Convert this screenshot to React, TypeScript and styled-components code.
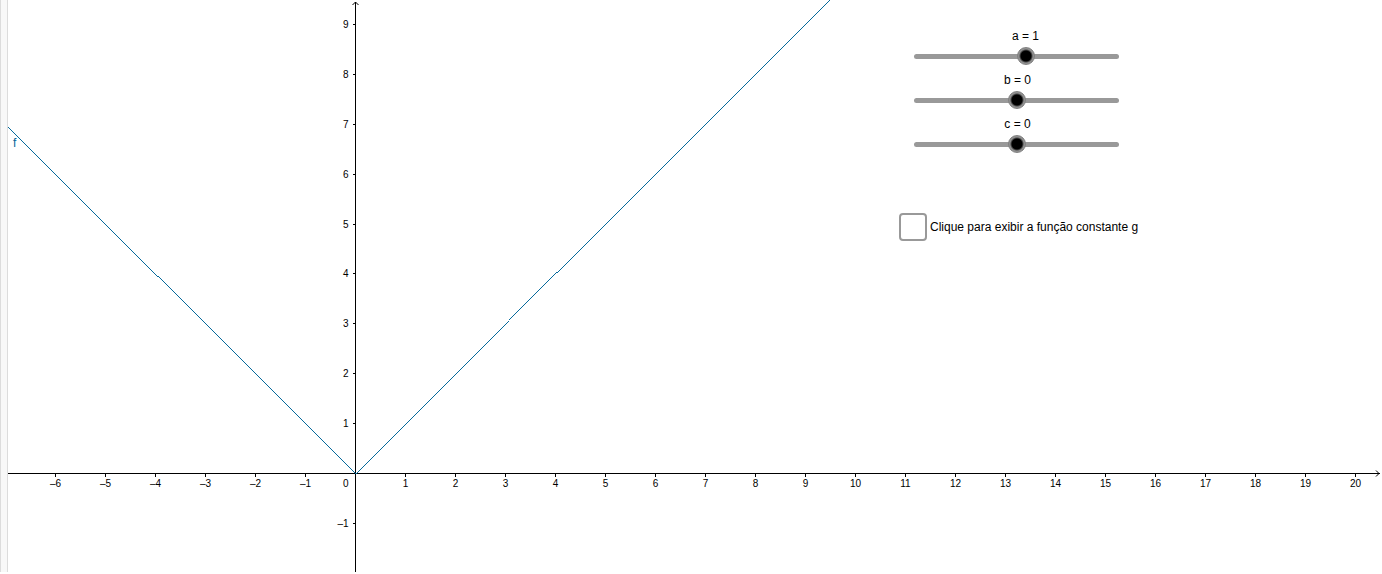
import { useEffect, useState } from 'react';
import styled, { createGlobalStyle } from 'styled-components';

const UNIT_X = 50;
const UNIT_Y = 49.88;
const ORIGIN_X = 347;
const ORIGIN_FROM_BOTTOM = 99;

const GlobalStyle = createGlobalStyle`
  * {
    box-sizing: border-box;
  }

  body {
    margin: 0;
    background: #ffffff;
    color: #000000;
    font-family: "Liberation Sans", Arial, sans-serif;
    overflow: hidden;
  }
`;

const Applet = styled.main`
  display: flex;
  height: 100vh;
  padding-bottom: 2px;
`;

const Gutter = styled.div`
  flex: 0 0 8px;
  background: #f8f8f8;
  border-left: 1px solid #dcdcdc;
  border-right: 1px solid #dcdcdc;
`;

const GraphicsView = styled.section`
  position: relative;
  flex: 1;
  min-width: 0;
`;

const Plot = styled.svg`
  display: block;
  width: 100%;
  height: 100%;
`;

const Axis = styled.path`
  fill: none;
  stroke: #000000;
  shape-rendering: crispEdges;
`;

const ArrowHead = styled.path`
  fill: none;
  stroke: #000000;
`;

/* Just under 1 keeps the diagonal a one-pixel hairline */
const Curve = styled.path`
  fill: none;
  stroke: #006699;
  stroke-width: 0.98;
  shape-rendering: crispEdges;
`;

const TickLabel = styled.text`
  font-size: 10px;
  fill: #000000;
`;

const CurveLabel = styled.text`
  font-size: 12px;
  fill: #006699;
`;

/* Widgets float over the plot */
const Controls = styled.form`
  position: absolute;
  top: 29px;
  left: 891px;
  display: flex;
  flex-direction: column;
  gap: 61px;
`;

const SliderGroup = styled.div`
  display: flex;
  flex-direction: column;
  gap: 9px;
  width: 205px;
  margin-left: 15px;
`;

const SliderField = styled.div<{ $shift: number }>`
  display: flex;
  flex-direction: column;
  gap: 5px;
  text-align: center;

  label {
    padding-left: ${({ $shift }) => $shift}px;
    font-size: 12px;
    line-height: 14px;
  }
`;

const Range = styled.input`
  appearance: none;
  display: block;
  width: 100%;
  height: 16px;
  margin: 0;
  background: transparent;
  cursor: pointer;

  &::-webkit-slider-runnable-track {
    height: 5px;
    border-radius: 3px;
    background: #999999;
  }

  &::-webkit-slider-thumb {
    appearance: none;
    width: 18px;
    height: 18px;
    margin-top: -7px;
    border: 1px solid #808080;
    border-radius: 50%;
    background: radial-gradient(circle, #000000 5px, #909090 7px);
  }
`;

const CheckField = styled.label`
  display: flex;
  align-items: center;
  gap: 3px;
  font-size: 12px;
  line-height: 14px;
  white-space: nowrap;
`;

const CheckBox = styled.input`
  appearance: none;
  width: 28px;
  height: 28px;
  margin: 0;
  border: 2px solid #999999;
  border-radius: 4px;
  background: #ffffff;

  &:checked {
    background: radial-gradient(circle, #000000 6px, #ffffff 7px);
  }
`;

interface SliderProps {
  name: string;
  value: number;
  onChange: (value: number) => void;
}

const Slider = ({ name, value, onChange }: SliderProps) => (
  <SliderField $shift={2 + value * 16}>
    <label htmlFor={name}>
      {name} = {value}
    </label>
    <Range
      id={name}
      type="range"
      min={-10}
      max={10}
      value={value}
      onChange={(e) => onChange(Number(e.target.value))}
    />
  </SliderField>
);

const format = (n: number) => (n < 0 ? `–${-n}` : `${n}`);

const range = (from: number, to: number) =>
  Array.from({ length: to - from + 1 }, (_, i) => from + i).filter((n) => n !== 0);

const App = () => {
  const [size, setSize] = useState({ width: window.innerWidth - 8, height: window.innerHeight - 2 });
  const [a, setA] = useState(1);
  const [b, setB] = useState(0);
  const [c, setC] = useState(0);
  const [showG, setShowG] = useState(false);

  useEffect(() => {
    const onResize = () => setSize({ width: window.innerWidth - 8, height: window.innerHeight - 2 });
    window.addEventListener('resize', onResize);
    return () => window.removeEventListener('resize', onResize);
  }, []);

  const originY = size.height - ORIGIN_FROM_BOTTOM;
  const toX = (x: number) => Math.round(ORIGIN_X + x * UNIT_X) + 0.5;
  const toY = (y: number) => Math.round(originY - y * UNIT_Y) + 0.5;

  const right = size.width - 2;
  const xTicks = range(-6, Math.floor((size.width - ORIGIN_X - 20) / UNIT_X));
  const yTicks = range(-1, Math.floor((originY - 8) / UNIT_Y));

  // f(x) = a|x + b| + c
  const f = (x: number) => a * Math.abs(x + b) + c;
  const points = [-8, -b, 24].map((x) => `${toX(x)} ${toY(f(x))}`);

  return (
    <>
      <GlobalStyle />
      <Applet>
        <Gutter />
        <GraphicsView>
          <Plot>
            <Axis d={`M0 ${toY(0)}H${right} M${toX(0)} 2V${size.height}`} />
            <ArrowHead d={`M${right - 4} ${toY(0) - 3}l3 3l-3 3`} />
            <ArrowHead d={`M${toX(0) - 3} 5l3 -3l3 3`} />
            {xTicks.map((n) => (
              <g key={n}>
                <Axis d={`M${toX(n)} ${toY(0)}v3`} />
                <TickLabel x={toX(n)} y={toY(0) + 13} textAnchor="middle">
                  {format(n)}
                </TickLabel>
              </g>
            ))}
            {yTicks.map((n) => (
              <g key={n}>
                <Axis d={`M${toX(0)} ${toY(n)}h-3`} />
                <TickLabel x={toX(0) - 7} y={toY(n) + 3} textAnchor="end">
                  {format(n)}
                </TickLabel>
              </g>
            ))}
            <TickLabel x={toX(0) - 7} y={toY(0) + 13} textAnchor="end">
              0
            </TickLabel>
            <Curve d={`M${points.join('L')}`} />
            {showG && <Curve d={`M0 ${toY(c)}H${size.width}`} />}
            <CurveLabel x={5} y={147}>
              f
            </CurveLabel>
          </Plot>
          <Controls>
            <SliderGroup>
              <Slider name="a" value={a} onChange={setA} />
              <Slider name="b" value={b} onChange={setB} />
              <Slider name="c" value={c} onChange={setC} />
            </SliderGroup>
            <CheckField>
              <CheckBox type="checkbox" checked={showG} onChange={(e) => setShowG(e.target.checked)} />
              Clique para exibir a função constante g
            </CheckField>
          </Controls>
        </GraphicsView>
      </Applet>
    </>
  );
};

export default App;
